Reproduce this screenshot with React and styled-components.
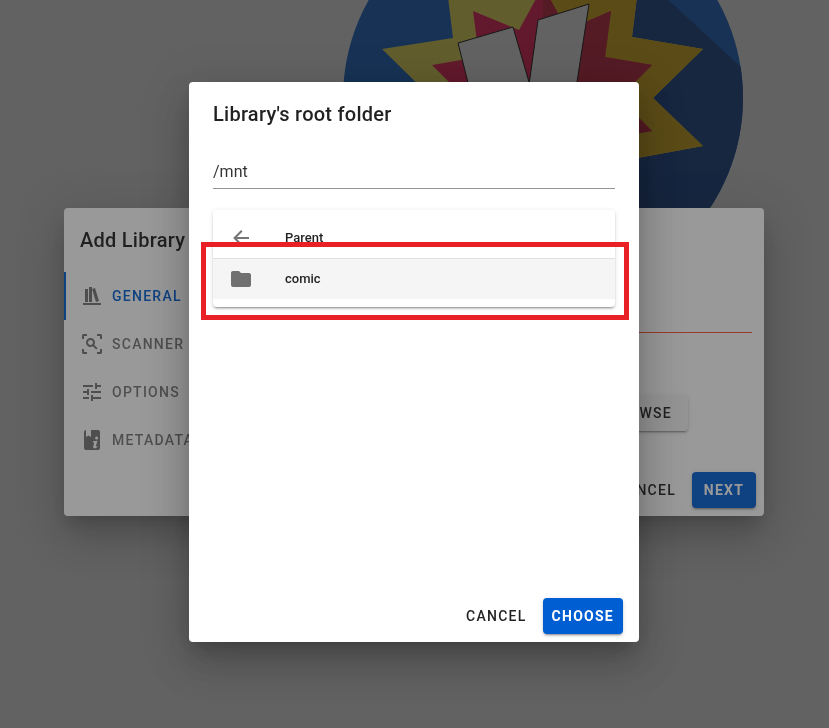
import React, { useState } from "react";
import styled, { createGlobalStyle } from "styled-components";

const GlobalStyle = createGlobalStyle`
  * {
    box-sizing: border-box;
  }
  body {
    margin: 0;
    overflow: hidden;
    background-color: #fff;
    color: rgba(0, 0, 0, 0.87);
    font-family: Roboto, "Liberation Sans", sans-serif;
    font-size: 16px;
    line-height: 24px;
  }
`;

const Page = styled.main`
  display: flex;
  justify-content: center;
  height: 100vh;
  padding-left: 256px;
  overflow: hidden;
`;

const LogoImage = styled.svg`
  flex: none;
  width: 400px;
  height: 400px;
  margin-top: -102px;
`;

const Overlay = styled.div`
  position: fixed;
  inset: 0;
  display: flex;
  align-items: center;
  justify-content: center;
  padding: 0 1px 4px 0;
  background-color: rgba(33, 33, 33, 0.46);
`;

const Dialog = styled.section`
  display: flex;
  flex-direction: column;
  width: 100%;
  max-width: ${(props) => props.$width};
  min-height: ${(props) => props.$minHeight || "auto"};
  border-radius: 4px;
  background-color: #fff;
  box-shadow: 0 11px 15px -7px rgba(0, 0, 0, 0.2),
    0 24px 38px 3px rgba(0, 0, 0, 0.14), 0 9px 46px 8px rgba(0, 0, 0, 0.12);
`;

const Title = styled.h2`
  margin: 0;
  padding: 16px ${(props) => props.$side || "24px"};
  font-size: 20px;
  font-weight: 500;
  line-height: 32px;
  letter-spacing: 0.0125em;
`;

const Columns = styled.div`
  display: flex;
`;

const Tabs = styled.nav`
  display: flex;
  flex-direction: column;
  flex: none;
`;

const Tab = styled.button`
  display: flex;
  align-items: center;
  gap: 8px;
  height: 48px;
  padding: 0 16px 0 14px;
  border: 0;
  border-left: 2px solid
    ${(props) => (props.$active ? "#005ed3" : "transparent")};
  background: none;
  color: ${(props) => (props.$active ? "#005ed3" : "rgba(0, 0, 0, 0.54)")};
  font: 500 14px Roboto, "Liberation Sans", sans-serif;
  letter-spacing: 0.09em;
  text-transform: uppercase;
  cursor: pointer;
`;

const Icon = styled.svg`
  flex: none;
  width: 24px;
  height: 24px;
  fill: rgba(0, 0, 0, 0.54);
`;

const Form = styled.div`
  display: flex;
  flex-direction: column;
  justify-content: space-between;
  flex: 1;
  padding: 20px 12px 33px;
`;

const FormRow = styled.div`
  display: flex;
  align-items: flex-end;
  gap: 16px;
  padding-right: 64px;
`;

const TextField = styled.input`
  display: block;
  width: 100%;
  min-width: 0;
  height: ${(props) => props.$height || "41px"};
  padding: 0;
  border: 0;
  border-bottom: 1px solid
    ${(props) => (props.$error ? "#ff5233" : "rgba(0, 0, 0, 0.42)")};
  border-radius: 0;
  outline: 0;
  background: none;
  color: rgba(0, 0, 0, 0.8);
  font: 400 16px Roboto, "Liberation Sans", sans-serif;
`;

const Actions = styled.footer`
  display: flex;
  justify-content: flex-end;
  gap: 8px;
  margin-top: auto;
  padding: 8px ${(props) => props.$side || "8px"};
`;

const Button = styled.button`
  flex: none;
  height: 36px;
  min-width: 64px;
  padding: 0 8px;
  border: 0;
  border-radius: 4px;
  background: none;
  color: rgba(0, 0, 0, 0.87);
  font: 500 14px Roboto, "Liberation Sans", sans-serif;
  letter-spacing: 0.09em;
  text-transform: uppercase;
  cursor: pointer;
`;

const RaisedButton = styled(Button)`
  padding: 0 16px;
  background-color: #f5f5f5;
  box-shadow: 0 3px 1px -2px rgba(0, 0, 0, 0.2),
    0 2px 2px 0 rgba(0, 0, 0, 0.14), 0 1px 5px 0 rgba(0, 0, 0, 0.12);
`;

const PrimaryButton = styled(RaisedButton)`
  padding: 0 9px;
  background-color: #005ed3;
  color: #fff;
  font-weight: 700;
`;

const PickerBody = styled.div`
  padding: 8px 24px;
`;

const FolderList = styled.ul`
  margin: 21px 0 0;
  padding: 8px 0;
  border-radius: 4px;
  background-color: #fff;
  list-style: none;
  box-shadow: 0 3px 1px -2px rgba(0, 0, 0, 0.2),
    0 2px 2px 0 rgba(0, 0, 0, 0.14), 0 1px 5px 0 rgba(0, 0, 0, 0.12);
`;

const FolderItem = styled.li`
  position: relative;

  & + & {
    border-top: 1px solid rgba(0, 0, 0, 0.12);
  }
`;

const FolderButton = styled.button`
  display: flex;
  align-items: center;
  gap: 32px;
  width: 100%;
  height: 40px;
  padding: 0 16px;
  border: 0;
  background-color: ${(props) => (props.$hover ? "#f5f5f5" : "transparent")};
  color: rgba(0, 0, 0, 0.87);
  font: 500 13px Roboto, "Liberation Sans", sans-serif;
  text-align: left;
  cursor: pointer;
`;

const FolderName = styled.span`
  padding-bottom: 2px;
`;

const Highlight = styled.span`
  position: absolute;
  inset: -17px -14px -21px -12px;
  border: 5px solid #ea2027;
  pointer-events: none;
`;

const icons = {
  bookshelf:
    "M9 3V18H12V3H9M12 5L16 18L19 17L15 4L12 5M5 5V18H8V5H5M3 19V21H21V19H3Z",
  scan: "M17 22V20H20V17H22V20.5C22 20.89 21.84 21.24 21.54 21.54C21.24 21.84 20.89 22 20.5 22H17M7 22H3.5C3.11 22 2.76 21.84 2.46 21.54C2.16 21.24 2 20.89 2 20.5V17H4V20H7V22M17 2H20.5C20.89 2 21.24 2.16 21.54 2.46C21.84 2.76 22 3.11 22 3.5V7H20V4H17V2M7 2V4H4V7H2V3.5C2 3.11 2.16 2.76 2.46 2.46C2.76 2.16 3.11 2 3.5 2H7M10.5 6C13 6 15 8 15 10.5C15 11.38 14.75 12.2 14.31 12.9L17.57 16.16L16.16 17.57L12.9 14.31C12.2 14.75 11.38 15 10.5 15C8 15 6 13 6 10.5C6 8 8 6 10.5 6M10.5 8C9.12 8 8 9.12 8 10.5C8 11.88 9.12 13 10.5 13C11.88 13 13 11.88 13 10.5C13 9.12 11.88 8 10.5 8Z",
  tune: "M3 17V19H9V17H3M3 5V7H13V5H3M13 21V19H21V17H13V15H11V21H13M7 9V11H3V13H7V15H9V9H7M21 13V11H11V13H21M15 9H17V7H21V5H17V3H15V9Z",
  bookInfo:
    "M6 2H18A2 2 0 0 1 20 4V20A2 2 0 0 1 18 22H6A2 2 0 0 1 4 20V4A2 2 0 0 1 6 2M6 2V9L8.500 7.500L11 9V2H6M16.600 8.500A1.500 1.500 0 1 0 16.600 11.500A1.500 1.500 0 1 0 16.600 8.500M13 13.200L17.400 12.700L15.900 18.200C15.800 18.900 16.400 18.700 17.300 18L17.700 18.700C15.700 20.700 12.800 21 13.200 18.700L14.200 14.700L12.800 14.300Z",
  back: "M20 11V13H8L13.5 18.5L12.080 19.920L4.160 12L12.080 4.080L13.5 5.500L8 11H20Z",
  folder:
    "M10 4H4C2.890 4 2 4.890 2 6V18A2 2 0 0 0 4 20H20A2 2 0 0 0 22 18V8C22 6.890 21.100 6 20 6H12L10 4Z",
};

const MdiIcon = ({ name }) => (
  <Icon viewBox="0 0 24 24" aria-hidden="true">
    <path fillRule="evenodd" d={icons[name]} />
  </Icon>
);

const Logo = () => (
  <LogoImage viewBox="343 -102 400 400" aria-hidden="true">
    <defs>
      <clipPath id="disc">
        <circle cx="543" cy="98" r="200" />
      </clipPath>
      <clipPath id="rightHalf">
        <rect x="543" y="-102" width="200" height="400" />
      </clipPath>
      <path
        id="burst"
        d="M543 -68L576 -20L644 -60L632 37L703 49L653 98L703 146L632 159L644 256L576 220L543 270L510 220L441 256L453 159L382 146L432 98L382 49L453 38L441 -60L510 -20Z"
      />
      <path
        id="innerBurst"
        d="M543 -14L567 30L611 11L605 57L652 65L619 98L652 131L605 139L611 185L567 166L543 210L519 166L473 185L479 139L432 131L465 98L432 65L479 57L473 11L519 30Z"
      />
    </defs>
    <g clipPath="url(#disc)">
      <rect x="343" y="-102" width="400" height="400" fill="#005ed3" />
      <path d="M543 -116L743 69V298H543Z" fill="#00368c" />
      <use href="#burst" fill="#ffec4d" />
      <use href="#burst" fill="#e6b000" clipPath="url(#rightHalf)" />
      <use href="#innerBurst" fill="#ff0a4b" />
      <use href="#innerBurst" fill="#d00f30" clipPath="url(#rightHalf)" />
      <g fill="#fff" stroke="#000" strokeWidth="1">
        <path d="M458 43L513 27L529 82L545 150H485Z" />
        <path d="M538 20L589 4L577 82L565 150H520Z" />
      </g>
    </g>
  </LogoImage>
);

const tabs = [
  { label: "General", icon: "bookshelf" },
  { label: "Scanner", icon: "scan" },
  { label: "Options", icon: "tune" },
  { label: "Metadata", icon: "bookInfo" },
];

const AddLibraryDialog = () => (
  <Overlay>
    <Dialog $width="700px" aria-label="Add Library">
      <Title $side="16px">Add Library</Title>
      <Columns>
        <Tabs>
          {tabs.map((tab, i) => (
            <Tab key={tab.label} type="button" $active={i === 0}>
              <MdiIcon name={tab.icon} />
              {tab.label}
            </Tab>
          ))}
        </Tabs>
        <Form>
          <TextField $error aria-label="Name" />
          <FormRow>
            <TextField aria-label="Root folder" />
            <RaisedButton type="button">Browse</RaisedButton>
          </FormRow>
        </Form>
      </Columns>
      <Actions>
        <Button type="button">Cancel</Button>
        <PrimaryButton type="button">Next</PrimaryButton>
      </Actions>
    </Dialog>
  </Overlay>
);

const FolderPickerDialog = () => {
  const [path, setPath] = useState("/mnt");

  return (
    <Overlay>
      <Dialog $width="450px" $minHeight="560px" aria-label="Library's root folder">
        <Title>Library's root folder</Title>
        <PickerBody>
          <TextField
            $height="35px"
            aria-label="Path"
            value={path}
            onChange={(e) => setPath(e.target.value)}
          />
          <FolderList>
            <FolderItem>
              <FolderButton type="button">
                <MdiIcon name="back" />
                <FolderName>Parent</FolderName>
              </FolderButton>
            </FolderItem>
            <FolderItem>
              <FolderButton type="button" $hover>
                <MdiIcon name="folder" />
                <FolderName>comic</FolderName>
              </FolderButton>
              <Highlight />
            </FolderItem>
          </FolderList>
        </PickerBody>
        <Actions $side="16px">
          <Button type="button">Cancel</Button>
          <PrimaryButton type="button">Choose</PrimaryButton>
        </Actions>
      </Dialog>
    </Overlay>
  );
};

const App = () => (
  <>
    <GlobalStyle />
    <Page>
      <Logo />
    </Page>
    <AddLibraryDialog />
    <FolderPickerDialog />
  </>
);

export default App;
